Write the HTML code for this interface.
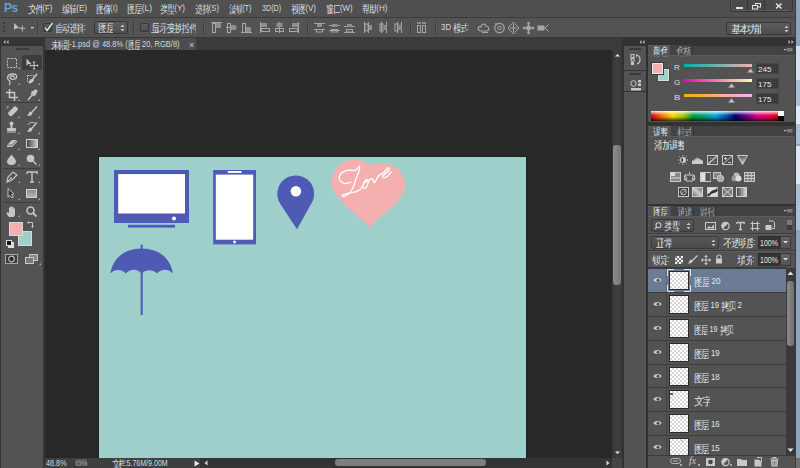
<!DOCTYPE html>
<html><head><meta charset="utf-8">
<style>
*{margin:0;padding:0;box-sizing:border-box}
html,body{width:800px;height:468px;overflow:hidden}
body{position:relative;background:#535353;font-family:"Liberation Sans",sans-serif;color:#d6d6d6;font-size:11px}
.a{position:absolute;display:block}
.t{position:absolute;white-space:nowrap;line-height:1;transform-origin:0 0}
.t i,.t b{display:inline-block;white-space:pre;font-style:normal;font-weight:normal;vertical-align:top;line-height:1}
.t i{text-align:center;overflow:hidden}
</style></head><body>
<div class="a" style="left:795px;top:0px;width:5px;height:468px;background:#8fa5be;"></div>
<div class="a" style="left:796px;top:46px;width:4px;height:34px;background:#d6e0ec;"></div>
<div class="a" style="left:796px;top:80px;width:4px;height:26px;background:#a9c0d9;"></div>
<div class="a" style="left:796px;top:106px;width:4px;height:18px;background:#e3e9f1;"></div>
<div class="a" style="left:796px;top:124px;width:4px;height:20px;background:#aac0d8;"></div>
<div class="a" style="left:796px;top:146px;width:4px;height:38px;background:#e0e7f0;"></div>
<div class="a" style="left:796px;top:184px;width:4px;height:46px;background:#a9bfd7;"></div>
<div class="a" style="left:796px;top:458px;width:4px;height:10px;background:#6f6f6f;"></div>
<div class="a" style="left:795px;top:0px;width:1px;height:468px;background:#3a3a3a;"></div>
<div class="a" style="left:0px;top:0px;width:795px;height:17px;background:#505050;"></div>
<div class="a" style="left:0px;top:17px;width:795px;height:1px;background:#3c3c3c;"></div>
<div class="a" style="left:0px;top:18px;width:795px;height:19px;background:#535353;"></div>
<div class="a" style="left:0px;top:37px;width:795px;height:1px;background:#383838;"></div>
<div class="a" style="left:0px;top:38px;width:45px;height:430px;background:#353535;"></div>
<div class="a" style="left:1px;top:46px;width:42px;height:422px;background:#535353;"></div>
<div class="a" style="left:45px;top:38px;width:577px;height:12px;background:#3b3b3b;"></div>
<div class="a" style="left:45px;top:38px;width:151px;height:12px;background:#4d4d4d;"></div>
<div class="a" style="left:45px;top:50px;width:567px;height:408px;background:#282828;"></div>
<div class="a" style="left:98px;top:156px;width:429px;height:302px;background:#202020;box-shadow:0 0 1px #222"></div>
<div class="a" style="left:99px;top:157px;width:427px;height:301px;background:#9ecfcb;"></div>
<div class="a" style="left:612px;top:50px;width:10px;height:408px;background:#3a3a3a;background:linear-gradient(90deg,#343434,#3f3f3f 50%,#383838)"></div>
<div class="a" style="left:613px;top:145px;width:8px;height:140px;background:#808080;border-radius:3px;background:linear-gradient(90deg,#8c8c8c,#767676)"></div>
<div class="a" style="left:45px;top:458px;width:155px;height:10px;background:#3f3f3f;"></div>
<div class="a" style="left:200px;top:458px;width:412px;height:10px;background:#333333;"></div>
<div class="a" style="left:335px;top:459px;width:151px;height:7px;background:#7d7d7d;border-radius:3px"></div>
<div class="a" style="left:612px;top:458px;width:10px;height:10px;background:#454545;"></div>
<div class="a" style="left:622px;top:38px;width:173px;height:430px;background:#323232;"></div>
<div class="a" style="left:624px;top:46px;width:22px;height:24px;background:#535353;"></div>
<div class="a" style="left:624px;top:71px;width:22px;height:20px;background:#535353;"></div>
<div class="a" style="left:624px;top:92px;width:22px;height:376px;background:#535353;"></div>
<div class="a" style="left:648px;top:46px;width:147px;height:9px;background:#424242;"></div>
<div class="a" style="left:648px;top:46px;width:22px;height:10px;background:#535353;"></div>
<div class="a" style="left:648px;top:55px;width:147px;height:67px;background:#535353;"></div>
<div class="a" style="left:648px;top:126px;width:147px;height:10px;background:#424242;"></div>
<div class="a" style="left:648px;top:126px;width:23px;height:10px;background:#535353;"></div>
<div class="a" style="left:648px;top:136px;width:147px;height:68px;background:#535353;"></div>
<div class="a" style="left:648px;top:206px;width:147px;height:10px;background:#424242;"></div>
<div class="a" style="left:648px;top:216px;width:147px;height:252px;background:#535353;"></div>
<svg class="a" style="left:0px;top:0px;" width="800" height="468" viewBox="0 0 800 468"><rect x="114" y="170" width="75" height="53" fill="#4e5ab4"/><rect x="118.2" y="174.1" width="66.8" height="39.4" fill="#fff"/><circle cx="174" cy="218.6" r="2" fill="#fff"/><rect x="128" y="224.8" width="47" height="2.8" fill="#4e5ab4"/><rect x="213.2" y="170" width="42.8" height="74.4" fill="#4e5ab4"/><rect x="215.8" y="174.6" width="37.4" height="65.1" fill="#fff"/><rect x="227.8" y="171" width="13.7" height="1.9" fill="#fff"/><circle cx="234.6" cy="242" r="1.4" fill="#fff"/><path d="M297.0,229.2 L280.34,203.93 A18.4,18.4 0 1 1 311.76,202.77 Z" fill="#4e5ab4"/><circle cx="295.9" cy="191.2" r="5.3" fill="#fff"/><path d="M370,227.3 C358,214 331.8,200 331.8,182 C331.8,168 342,159.7 354,159.7 C362,159.7 368,163 370,165.4 C372,164.5 377,163.2 383.1,163.2 C395,163.2 405.1,173 405.1,185.3 C405.1,202 382,213 370,227.3 Z" fill="#f4afaf"/><path d="M350.90,182.30 C349.88,182.50 346.63,183.83 344.80,183.50 C342.97,183.17 340.78,181.58 339.90,180.30 C339.02,179.02 339.03,177.15 339.50,175.80 C339.97,174.45 341.15,173.15 342.70,172.20 C344.25,171.25 346.83,170.38 348.80,170.10 C350.77,169.82 353.07,170.77 354.50,170.50 C355.93,170.23 356.58,169.23 357.40,168.50 C358.22,167.77 359.07,166.50 359.40,166.10" fill="none" stroke="#fff" stroke-width="1.35" stroke-linecap="round" stroke-linejoin="round"/><path d="M359.40,166.10 C359.43,166.63 359.80,168.08 359.60,169.30 C359.40,170.52 358.78,171.90 358.20,173.40 C357.62,174.90 356.78,176.40 356.10,178.30 C355.42,180.20 354.83,182.85 354.10,184.80 C353.37,186.75 352.72,188.45 351.70,190.00 C350.68,191.55 349.30,193.05 348.00,194.10 C346.70,195.15 344.87,195.98 343.90,196.30 C342.93,196.62 342.33,196.30 342.20,196.00 C342.07,195.70 342.27,194.95 343.10,194.50 C343.93,194.05 345.30,193.70 347.20,193.30 C349.10,192.90 352.47,192.65 354.50,192.10 C356.53,191.55 358.05,190.95 359.40,190.00 C360.75,189.05 362.07,187.00 362.60,186.40" fill="none" stroke="#fff" stroke-width="1.35" stroke-linecap="round" stroke-linejoin="round"/><path d="M362.60,186.40 C362.88,185.65 363.62,183.05 364.30,181.90 C364.98,180.75 366.03,179.63 366.70,179.50 C367.37,179.37 368.23,180.02 368.30,181.10 C368.37,182.18 367.70,184.78 367.10,186.00 C366.50,187.22 365.38,188.20 364.70,188.40 C364.02,188.60 363.13,188.02 363.00,187.20 C362.87,186.38 363.35,184.45 363.90,183.50 C364.45,182.55 365.43,181.97 366.30,181.50 C367.17,181.03 368.63,180.83 369.10,180.70" fill="none" stroke="#fff" stroke-width="1.35" stroke-linecap="round" stroke-linejoin="round"/><path d="M369.10,180.70 C369.45,180.37 370.58,178.90 371.20,178.70 C371.82,178.50 372.33,178.83 372.80,179.50 C373.27,180.17 373.52,182.50 374.00,182.70 C374.48,182.90 374.88,181.92 375.70,180.70 C376.52,179.48 378.37,176.28 378.90,175.40" fill="none" stroke="#fff" stroke-width="1.35" stroke-linecap="round" stroke-linejoin="round"/><path d="M378.90,175.40 C379.58,175.00 381.65,174.08 383.00,173.00 C384.35,171.92 385.98,169.72 387.00,168.90 C388.02,168.08 388.82,167.83 389.10,168.10 C389.38,168.37 389.45,169.48 388.70,170.50 C387.95,171.52 385.62,173.18 384.60,174.20 C383.58,175.22 382.60,176.03 382.60,176.60 C382.60,177.17 383.65,177.80 384.60,177.60 C385.55,177.40 387.22,176.37 388.30,175.40 C389.38,174.43 390.63,172.40 391.10,171.80" fill="none" stroke="#fff" stroke-width="1.35" stroke-linecap="round" stroke-linejoin="round"/><path d="M110.4,273.5 C112.4,259.5 123.65,248.5 141.65,248.5 C159.65,248.5 170.9,259.5 172.9,273.5 A10.4,10.4 0 0 0 156.9,273.5 A10.4,10.4 0 0 0 141.7,273.5 A10.4,10.4 0 0 0 125.8,273.5 A10.4,10.4 0 0 0 110.4,273.5 Z" fill="#4e5ab4"/><rect x="140.7" y="244.6" width="2" height="6" fill="#4e5ab4"/><rect x="140.7" y="268" width="2" height="47" fill="#4e5ab4"/></svg>
<div class="t" style="left:4px;top:2px;font-size:12px;font-weight:bold;color:#61a0d8;letter-spacing:-0.6px">Ps</div>
<div class="t" style="left:28px;top:4px;color:#d8d8d8;transform:scaleX(0.893);"><i style="width:8px;font-size:11px">文</i><i style="width:8px;font-size:11px">件</i><b style="font-size:9px;letter-spacing:0px">(F)</b></div>
<div class="t" style="left:62px;top:4px;color:#d8d8d8;transform:scaleX(0.893);"><i style="width:8px;font-size:11px">编</i><i style="width:8px;font-size:11px">辑</i><b style="font-size:9px;letter-spacing:0px">(E)</b></div>
<div class="t" style="left:96px;top:4px;color:#d8d8d8;transform:scaleX(0.880);"><i style="width:8px;font-size:11px">图</i><i style="width:8px;font-size:11px">像</i><b style="font-size:9px;letter-spacing:0px">(I)</b></div>
<div class="t" style="left:127px;top:4px;color:#d8d8d8;transform:scaleX(0.926);"><i style="width:8px;font-size:11px">图</i><i style="width:8px;font-size:11px">层</i><b style="font-size:9px;letter-spacing:0px">(L)</b></div>
<div class="t" style="left:160px;top:4px;color:#d8d8d8;transform:scaleX(0.893);"><i style="width:8px;font-size:11px">类</i><i style="width:8px;font-size:11px">型</i><b style="font-size:9px;letter-spacing:0px">(Y)</b></div>
<div class="t" style="left:195px;top:4px;color:#d8d8d8;transform:scaleX(0.857);"><i style="width:8px;font-size:11px">选</i><i style="width:8px;font-size:11px">择</i><b style="font-size:9px;letter-spacing:0px">(S)</b></div>
<div class="t" style="left:229px;top:4px;color:#d8d8d8;transform:scaleX(0.821);"><i style="width:8px;font-size:11px">滤</i><i style="width:8px;font-size:11px">镜</i><b style="font-size:9px;letter-spacing:0px">(T)</b></div>
<div class="t" style="left:262px;top:4px;color:#d8d8d8;transform:scaleX(0.800);"><b style="font-size:9px;letter-spacing:0px">3D(D)</b></div>
<div class="t" style="left:291px;top:4px;color:#d8d8d8;transform:scaleX(0.893);"><i style="width:8px;font-size:11px">视</i><i style="width:8px;font-size:11px">图</i><b style="font-size:9px;letter-spacing:0px">(V)</b></div>
<div class="t" style="left:326px;top:4px;color:#d8d8d8;transform:scaleX(0.871);"><i style="width:8px;font-size:11px">窗</i><i style="width:8px;font-size:11px">口</i><b style="font-size:9px;letter-spacing:0px">(W)</b></div>
<div class="t" style="left:362px;top:4px;color:#d8d8d8;transform:scaleX(0.897);"><i style="width:8px;font-size:11px">帮</i><i style="width:8px;font-size:11px">助</i><b style="font-size:9px;letter-spacing:0px">(H)</b></div>
<div class="t" style="left:55px;top:23px;color:#d8d8d8;transform:scaleX(0.939);"><i style="width:7.5px;font-size:11px">自</i><i style="width:7.5px;font-size:11px">动</i><i style="width:7.5px;font-size:11px">选</i><i style="width:7.5px;font-size:11px">择</i><b style="font-size:9px;letter-spacing:0px">:</b></div>
<div class="t" style="left:151px;top:23px;color:#d8d8d8;transform:scaleX(1.000);"><i style="width:7.5px;font-size:11px">显</i><i style="width:7.5px;font-size:11px">示</i><i style="width:7.5px;font-size:11px">变</i><i style="width:7.5px;font-size:11px">换</i><i style="width:7.5px;font-size:11px">控</i><i style="width:7.5px;font-size:11px">件</i></div>
<div class="t" style="left:441px;top:23px;color:#d8d8d8;transform:scaleX(0.879);"><b style="font-size:9px;letter-spacing:0px">3D </b><i style="width:7.5px;font-size:11px">模</i><i style="width:7.5px;font-size:11px">式</i><b style="font-size:9px;letter-spacing:0px">:</b></div>
<div class="t" style="left:51px;top:40px;color:#d8d8d8;transform:scaleX(0.834);"><i style="width:7.3px;font-size:11px">未</i><i style="width:7.3px;font-size:11px">标</i><i style="width:7.3px;font-size:11px">题</i><b style="font-size:9px;letter-spacing:0px">-1.psd @ 48.8% (</b><i style="width:7.3px;font-size:11px">图</i><i style="width:7.3px;font-size:11px">层</i><b style="font-size:9px;letter-spacing:0px"> 20, RGB/8)</b></div>
<div class="t" style="left:189px;top:41px;font-size:9px;color:#cfcfcf">×</div>
<div class="t" style="left:46px;top:459px;color:#d8d8d8;transform:scaleX(0.808);"><b style="font-size:9px;letter-spacing:0px">48.8%</b></div>
<div class="t" style="left:112px;top:459px;color:#d8d8d8;transform:scaleX(0.784);"><i style="width:8px;font-size:11px">文</i><i style="width:8px;font-size:11px">档</i><b style="font-size:9px;letter-spacing:0px">:5.76M/9.00M</b></div>
<div class="a" style="left:730px;top:0px;width:63px;height:12px;background:#4a4a4a;border:1px solid #363636;border-top:none;border-radius:0 0 3px 3px;box-shadow:inset 1px -1px 0 #5c5c5c"></div>
<div class="a" style="left:747px;top:0px;width:1px;height:11px;background:#363636;"></div>
<div class="a" style="left:764px;top:0px;width:1px;height:11px;background:#363636;"></div>
<svg class="a" style="left:730px;top:0px;" width="63" height="11" viewBox="0 0 63 11"><rect x="6" y="7" width="7" height="2" fill="#e2e2e2"/><rect x="25.5" y="3.5" width="5" height="3.5" fill="none" stroke="#e2e2e2" stroke-width="1"/><rect x="22.5" y="5.5" width="5" height="3.5" fill="#4e4e4e" stroke="#e2e2e2" stroke-width="1"/><path d="M46,3.5 L51.5,8.5 M51.5,3.5 L46,8.5" stroke="#e2e2e2" stroke-width="1.6"/></svg>
<svg class="a" style="left:2px;top:21px;" width="4" height="13" viewBox="0 0 4 13"><rect x="1" y="1" width="2" height="2" fill="#3d3d3d"/><rect x="1" y="5" width="2" height="2" fill="#3d3d3d"/><rect x="1" y="9" width="2" height="2" fill="#3d3d3d"/></svg>
<svg class="a" style="left:12px;top:21px;" width="24" height="14" viewBox="0 0 24 14"><path d="M2,2 L2,9 L4,7.5 L7.5,7Z" fill="#bcbcbc"/><path d="M10.3,4.5 V10.5 M7.3,7.3 H13.3" stroke="#c8c8c8" stroke-width="0.9"/><rect x="19" y="6" width="2.5" height="1.3" fill="#e0e0e0"/></svg>
<div class="a" style="left:37px;top:21px;width:1px;height:14px;background:#3e3e3e;"></div>
<div class="a" style="left:38px;top:21px;width:1px;height:14px;background:#5b5b5b;"></div>
<div class="a" style="left:43px;top:23px;width:9px;height:9px;background:#4c4c4c;border:1px solid #363636;border-radius:2px;background:linear-gradient(#5a5a5a,#4a4a4a);box-shadow:0 1px 0 #5c5c5c"></div>
<svg class="a" style="left:42px;top:21px;" width="12" height="12" viewBox="0 0 12 12"><path d="M3,6.5 L5,9.5 L10.5,2" fill="none" stroke="#e6e6e6" stroke-width="1.3"/></svg>
<div class="a" style="left:94px;top:21px;width:34px;height:13px;background:#555;border:1px solid #383838;border-radius:2px;background:linear-gradient(#5e5e5e,#4f4f4f)"></div>
<div class="t" style="left:98px;top:23px;color:#d8d8d8;transform:scaleX(1.000);"><i style="width:7.5px;font-size:11px">图</i><i style="width:7.5px;font-size:11px">层</i></div>
<svg class="a" style="left:120px;top:24px;" width="5" height="8" viewBox="0 0 5 8"><path d="M0.5,3 L2.5,0.8 L4.5,3Z M0.5,5 L2.5,7.2 L4.5,5Z" fill="#cdcdcd"/></svg>
<div class="a" style="left:133px;top:21px;width:1px;height:14px;background:#3e3e3e;"></div>
<div class="a" style="left:134px;top:21px;width:1px;height:14px;background:#5b5b5b;"></div>
<div class="a" style="left:140px;top:23px;width:9px;height:9px;background:#555;border:1px solid #363636;border-radius:2px;background:linear-gradient(#5e5e5e,#4e4e4e);box-shadow:0 1px 0 #5c5c5c"></div>
<div class="a" style="left:203px;top:21px;width:1px;height:14px;background:#3e3e3e;"></div>
<div class="a" style="left:204px;top:21px;width:1px;height:14px;background:#5b5b5b;"></div>
<svg class="a" style="left:211px;top:22px;" width="12" height="12" viewBox="0 0 12 12"><path d="M0,0.5 H11" stroke="#a6a6a6"/><rect x="1.5" y="1.5" width="3" height="9" fill="none" stroke="#a6a6a6"/><rect x="5" y="1" width="5" height="5" fill="#8e8e8e"/></svg>
<svg class="a" style="left:226px;top:22px;" width="12" height="12" viewBox="0 0 12 12"><path d="M0,5.5 H11" stroke="#a6a6a6"/><rect x="1.5" y="1.5" width="3" height="9" fill="none" stroke="#a6a6a6"/><rect x="5" y="3" width="5" height="5" fill="#8e8e8e"/></svg>
<svg class="a" style="left:241px;top:22px;" width="12" height="12" viewBox="0 0 12 12"><path d="M0,10.5 H11" stroke="#a6a6a6"/><rect x="1.5" y="1.5" width="3" height="9" fill="none" stroke="#a6a6a6"/><rect x="5" y="5" width="5" height="5" fill="#8e8e8e"/></svg>
<svg class="a" style="left:260px;top:22px;" width="12" height="12" viewBox="0 0 12 12"><path d="M0.5,0 V11" stroke="#a6a6a6"/><rect x="1.5" y="6.5" width="8" height="3" fill="none" stroke="#a6a6a6"/><rect x="1" y="1" width="6" height="4" fill="#8e8e8e"/></svg>
<svg class="a" style="left:275px;top:22px;" width="12" height="12" viewBox="0 0 12 12"><path d="M4.5,0 V11" stroke="#a6a6a6"/><rect x="0.5" y="6.5" width="8" height="3" fill="none" stroke="#a6a6a6"/><rect x="1.5" y="1" width="6" height="4" fill="#8e8e8e"/></svg>
<svg class="a" style="left:289px;top:22px;" width="12" height="12" viewBox="0 0 12 12"><path d="M9.5,0 V11" stroke="#a6a6a6"/><rect x="0.5" y="6.5" width="8" height="3" fill="none" stroke="#a6a6a6"/><rect x="3" y="1" width="6" height="4" fill="#8e8e8e"/></svg>
<div class="a" style="left:307px;top:21px;width:1px;height:14px;background:#3e3e3e;"></div>
<div class="a" style="left:308px;top:21px;width:1px;height:14px;background:#5b5b5b;"></div>
<svg class="a" style="left:314px;top:22px;" width="12" height="12" viewBox="0 0 12 12"><path d="M0,1.5 H11 M0,7.5 H11" stroke="#a6a6a6"/><rect x="3" y="2" width="5" height="3" fill="#8e8e8e"/><rect x="2.5" y="7.5" width="6" height="2.5" fill="none" stroke="#a6a6a6"/></svg>
<svg class="a" style="left:329px;top:22px;" width="12" height="12" viewBox="0 0 12 12"><path d="M0,3.5 H11 M0,8.5 H11" stroke="#a6a6a6"/><rect x="3" y="2" width="5" height="3" fill="#8e8e8e"/><rect x="2.5" y="7.5" width="6" height="2.5" fill="none" stroke="#a6a6a6"/></svg>
<svg class="a" style="left:344px;top:22px;" width="12" height="12" viewBox="0 0 12 12"><path d="M0,4.5 H11 M0,10.5 H11" stroke="#a6a6a6"/><rect x="3" y="2" width="5" height="3" fill="#8e8e8e"/><rect x="2.5" y="7.5" width="6" height="2.5" fill="none" stroke="#a6a6a6"/></svg>
<svg class="a" style="left:363px;top:22px;" width="12" height="12" viewBox="0 0 12 12"><path d="M1.5,0 V11 M5.5,0 V11" stroke="#a6a6a6"/><rect x="2" y="2" width="3" height="7" fill="none" stroke="#a6a6a6"/><rect x="6" y="3" width="3" height="5" fill="#8e8e8e"/></svg>
<svg class="a" style="left:378px;top:22px;" width="12" height="12" viewBox="0 0 12 12"><path d="M3.5,0 V11 M8.5,0 V11" stroke="#a6a6a6"/><rect x="2" y="2" width="3" height="7" fill="none" stroke="#a6a6a6"/><rect x="6" y="3" width="3" height="5" fill="#8e8e8e"/></svg>
<svg class="a" style="left:393px;top:22px;" width="12" height="12" viewBox="0 0 12 12"><path d="M4.5,0 V11 M8.5,0 V11" stroke="#a6a6a6"/><rect x="2" y="2" width="3" height="7" fill="none" stroke="#a6a6a6"/><rect x="6" y="3" width="3" height="5" fill="#8e8e8e"/></svg>
<div class="a" style="left:410px;top:21px;width:1px;height:14px;background:#3e3e3e;"></div>
<div class="a" style="left:411px;top:21px;width:1px;height:14px;background:#5b5b5b;"></div>
<svg class="a" style="left:416px;top:22px;" width="12" height="12" viewBox="0 0 12 12"><rect x="1.5" y="3.5" width="3" height="7" fill="none" stroke="#a6a6a6"/><rect x="6.5" y="3.5" width="3" height="7" fill="none" stroke="#a6a6a6"/><rect x="1" y="0" width="4" height="2" fill="#8e8e8e"/><rect x="6" y="0" width="4" height="2" fill="#8e8e8e"/></svg>
<div class="a" style="left:435px;top:21px;width:1px;height:14px;background:#3e3e3e;"></div>
<div class="a" style="left:436px;top:21px;width:1px;height:14px;background:#5b5b5b;"></div>
<svg class="a" style="left:477px;top:21px;" width="14" height="14" viewBox="0 0 14 14"><path d="M2,9 C0,7 2,5 4,6 C4,3 8,2 9,5 C12,5 13,9 10,10 L4,10 C3,10 2,9.5 2,9Z" fill="none" stroke="#a6a6a6" stroke-width="1.2"/><path d="M5,11.5 H11" stroke="#a6a6a6"/></svg>
<svg class="a" style="left:493px;top:21px;" width="13" height="14" viewBox="0 0 13 14"><circle cx="6.5" cy="7" r="4.7" fill="none" stroke="#a6a6a6" stroke-width="1.2"/><circle cx="6.5" cy="7" r="1.8" fill="none" stroke="#a6a6a6"/><path d="M2,2 L4.5,2.5 L3,4.5Z" fill="#a6a6a6"/></svg>
<svg class="a" style="left:507px;top:21px;" width="13" height="14" viewBox="0 0 13 14"><path d="M6.5,1 L12,7 L6.5,13 L1,7Z" fill="none" stroke="#a6a6a6"/><path d="M6.5,3 V11 M3,7 H10" stroke="#a6a6a6"/></svg>
<svg class="a" style="left:522px;top:21px;" width="13" height="14" viewBox="0 0 13 14"><path d="M6.5,1 V13 M1,7 H12" stroke="#a6a6a6" stroke-width="1.4"/><circle cx="6.5" cy="7" r="2.5" fill="#a6a6a6"/><path d="M6.5,0.5 l-2,2 h4z M6.5,13.5 l-2,-2 h4z M0.5,7 l2,-2 v4z M12.5,7 l-2,-2 v4z" fill="#a6a6a6"/></svg>
<svg class="a" style="left:537px;top:21px;" width="13" height="14" viewBox="0 0 13 14"><rect x="0.5" y="4.5" width="7" height="5" fill="#a6a6a6"/><path d="M8,7 L11.5,3.5 M8,7 L11.5,10.5" stroke="#a6a6a6" fill="none"/></svg>
<div class="a" style="left:726px;top:22px;width:65px;height:13px;background:#555;border:1px solid #383838;border-radius:2px;background:linear-gradient(#5c5c5c,#4e4e4e)"></div>
<div class="t" style="left:731px;top:24px;color:#e0e0e0;transform:scaleX(1.000);"><i style="width:7.5px;font-size:11px">基</i><i style="width:7.5px;font-size:11px">本</i><i style="width:7.5px;font-size:11px">功</i><i style="width:7.5px;font-size:11px">能</i></div>
<svg class="a" style="left:784px;top:25px;" width="5" height="8" viewBox="0 0 5 8"><path d="M0.5,3 L2.5,0.8 L4.5,3Z M0.5,5 L2.5,7.2 L4.5,5Z" fill="#cdcdcd"/></svg>
<svg class="a" style="left:3px;top:40px;" width="6" height="4" viewBox="0 0 6 4"><path d="M2.5,0 L0.5,2 L2.5,4Z M5.5,0 L3.5,2 L5.5,4Z" fill="#bdbdbd"/></svg>
<svg class="a" style="left:16px;top:48px;" width="13" height="3" viewBox="0 0 13 3"><rect x="0" y="0" width="13" height="2" fill="#3b3b3b"/></svg>
<div class="a" style="left:22px;top:55px;width:20px;height:15px;background:#3c3c3c;border-radius:2px"></div>
<svg class="a" style="left:6px;top:57px;" width="14" height="13" viewBox="0 0 14 13"><rect x="1.5" y="1.5" width="9" height="9" fill="none" stroke="#c6c6c6" stroke-dasharray="2,1.2"/></svg>
<svg class="a" style="left:18px;top:67px;" width="2" height="2" viewBox="0 0 2 2"><path d="M2,0 V2 H0Z" fill="#a8a8a8"/></svg>
<svg class="a" style="left:25px;top:58px;" width="15" height="13" viewBox="0 0 15 13"><path d="M1.5,0.5 V8 L3.5,6 L6.5,6Z" fill="#c6c6c6"/><path d="M9,4 V11 M5.5,7.5 H12.5" stroke="#c6c6c6"/><path d="M9,3 l-1.5,1.5 h3z M9,12 l-1.5,-1.5 h3z M4.5,7.5 l1.5,-1.5 v3z M13.5,7.5 l-1.5,-1.5 v3z" fill="#c6c6c6"/></svg>
<svg class="a" style="left:6px;top:73px;" width="14" height="13" viewBox="0 0 14 13"><path d="M4,8 C0,6 1,1 7,1 C11,1 12,4 9,6 C7,7 4,6 4,4 C5,2 9,3 8,5 M4,8 C3,10 5,11 3,12" fill="none" stroke="#c6c6c6" stroke-width="1.3"/></svg>
<svg class="a" style="left:18px;top:83px;" width="2" height="2" viewBox="0 0 2 2"><path d="M2,0 V2 H0Z" fill="#a8a8a8"/></svg>
<svg class="a" style="left:26px;top:73px;" width="14" height="13" viewBox="0 0 14 13"><rect x="1.5" y="2.5" width="6" height="6" fill="none" stroke="#c6c6c6" stroke-dasharray="1.5,1"/><path d="M11,1 L6,7" stroke="#c6c6c6" stroke-width="1.6"/><path d="M2,10 C4,11 7,10 7,7 L5,6 C3,7 4,9 2,10Z" fill="#c6c6c6"/></svg>
<svg class="a" style="left:38px;top:83px;" width="2" height="2" viewBox="0 0 2 2"><path d="M2,0 V2 H0Z" fill="#a8a8a8"/></svg>
<svg class="a" style="left:6px;top:89px;" width="14" height="13" viewBox="0 0 14 13"><path d="M3.5,0 V8.5 H12 M0,3.5 H8.5 V12" fill="none" stroke="#c6c6c6" stroke-width="1.5"/></svg>
<svg class="a" style="left:18px;top:99px;" width="2" height="2" viewBox="0 0 2 2"><path d="M2,0 V2 H0Z" fill="#a8a8a8"/></svg>
<svg class="a" style="left:26px;top:89px;" width="14" height="13" viewBox="0 0 14 13"><path d="M2,11 L7,5" stroke="#c6c6c6" stroke-width="1.5"/><path d="M6,3 L10,1 L11,2 L9,6 Z M5,4 L8,7" stroke="#c6c6c6" fill="#c6c6c6" stroke-width="1.2"/></svg>
<svg class="a" style="left:38px;top:99px;" width="2" height="2" viewBox="0 0 2 2"><path d="M2,0 V2 H0Z" fill="#a8a8a8"/></svg>
<div class="a" style="left:3px;top:102px;width:38px;height:1px;background:#3e3e3e;"></div>
<svg class="a" style="left:6px;top:106px;" width="14" height="13" viewBox="0 0 14 13"><rect x="2" y="3" width="11" height="5" rx="2" transform="rotate(-45 7 6)" fill="#c6c6c6"/><path d="M1,2.5 V0.8 H3" stroke="#aaa" fill="none"/></svg>
<svg class="a" style="left:18px;top:116px;" width="2" height="2" viewBox="0 0 2 2"><path d="M2,0 V2 H0Z" fill="#a8a8a8"/></svg>
<svg class="a" style="left:26px;top:106px;" width="14" height="13" viewBox="0 0 14 13"><path d="M11,0.5 L6,6" stroke="#c6c6c6" stroke-width="1.4"/><path d="M1,10 C4,10 7,9 6.5,6.5 L5,5.5 C2,6 3,9 1,10Z" fill="#c6c6c6"/></svg>
<svg class="a" style="left:38px;top:116px;" width="2" height="2" viewBox="0 0 2 2"><path d="M2,0 V2 H0Z" fill="#a8a8a8"/></svg>
<svg class="a" style="left:6px;top:121px;" width="14" height="13" viewBox="0 0 14 13"><circle cx="5.5" cy="2.5" r="2" fill="#c6c6c6"/><rect x="4.5" y="3" width="2" height="4" fill="#c6c6c6"/><rect x="1" y="7" width="9" height="3" rx="1" fill="#c6c6c6"/><rect x="1" y="10.5" width="9" height="1" fill="#c6c6c6"/></svg>
<svg class="a" style="left:18px;top:132px;" width="2" height="2" viewBox="0 0 2 2"><path d="M2,0 V2 H0Z" fill="#a8a8a8"/></svg>
<svg class="a" style="left:26px;top:121px;" width="14" height="13" viewBox="0 0 14 13"><path d="M11,1.5 L6,7" stroke="#c6c6c6" stroke-width="1.4"/><path d="M1,11 C4,11 7,10 6.5,7.5 L5,6.5 C2,7 3,10 1,11Z" fill="#c6c6c6"/><path d="M2,4 C3,1 7,1 9,2" stroke="#c6c6c6" fill="none"/></svg>
<svg class="a" style="left:38px;top:132px;" width="2" height="2" viewBox="0 0 2 2"><path d="M2,0 V2 H0Z" fill="#a8a8a8"/></svg>
<svg class="a" style="left:6px;top:138px;" width="14" height="13" viewBox="0 0 14 13"><path d="M1,7 L6,2 L11,2 L11,4 L6,9 L1,9Z" fill="#c6c6c6"/><path d="M1,7 H6 L11,2" stroke="#6a6a6a" fill="none"/></svg>
<svg class="a" style="left:18px;top:148px;" width="2" height="2" viewBox="0 0 2 2"><path d="M2,0 V2 H0Z" fill="#a8a8a8"/></svg>
<svg class="a" style="left:26px;top:139px;" width="14" height="13" viewBox="0 0 14 13"><defs><linearGradient id="gr" x1="0" x2="1"><stop offset="0" stop-color="#3e3e3e"/><stop offset="1" stop-color="#d0d0d0"/></linearGradient></defs><rect x="0.5" y="0.5" width="11" height="8" fill="url(#gr)" stroke="#cfcfcf"/></svg>
<svg class="a" style="left:38px;top:148px;" width="2" height="2" viewBox="0 0 2 2"><path d="M2,0 V2 H0Z" fill="#a8a8a8"/></svg>
<svg class="a" style="left:7px;top:154px;" width="14" height="13" viewBox="0 0 14 13"><path d="M4.5,0.5 C6,3 9,5 9,7.5 C9,10 7,11 4.5,11 C2,11 0,10 0,7.5 C0,5 3,3 4.5,0.5Z" fill="#c6c6c6"/></svg>
<svg class="a" style="left:18px;top:164px;" width="2" height="2" viewBox="0 0 2 2"><path d="M2,0 V2 H0Z" fill="#a8a8a8"/></svg>
<svg class="a" style="left:26px;top:154px;" width="14" height="13" viewBox="0 0 14 13"><circle cx="4.5" cy="4.5" r="3.8" fill="#c6c6c6"/><path d="M7,7 L10.5,10.5" stroke="#c6c6c6" stroke-width="1.5"/></svg>
<svg class="a" style="left:38px;top:164px;" width="2" height="2" viewBox="0 0 2 2"><path d="M2,0 V2 H0Z" fill="#a8a8a8"/></svg>
<div class="a" style="left:3px;top:168px;width:38px;height:1px;background:#3e3e3e;"></div>
<svg class="a" style="left:6px;top:171px;" width="14" height="13" viewBox="0 0 14 13"><path d="M1,11 L2,6 L7,1 L11,4 L6,9Z" fill="none" stroke="#c6c6c6" stroke-width="1.2"/><path d="M1,11 L4.5,7.5" stroke="#c6c6c6"/><circle cx="4.8" cy="7.2" r="1" fill="#c6c6c6"/></svg>
<svg class="a" style="left:18px;top:181px;" width="2" height="2" viewBox="0 0 2 2"><path d="M2,0 V2 H0Z" fill="#a8a8a8"/></svg>
<svg class="a" style="left:26px;top:171px;" width="14" height="13" viewBox="0 0 14 13"><path d="M1,1 H11 V3 M1,1 V3 M6,1 V11 M4,11 H8" stroke="#c6c6c6" stroke-width="1.4" fill="none"/></svg>
<svg class="a" style="left:38px;top:181px;" width="2" height="2" viewBox="0 0 2 2"><path d="M2,0 V2 H0Z" fill="#a8a8a8"/></svg>
<svg class="a" style="left:7px;top:188px;" width="14" height="13" viewBox="0 0 14 13"><path d="M1,0.5 L1,9 L3,7.5 L5,10 L6.5,9 L4.5,6.5 L7,6Z" fill="#333" stroke="#c6c6c6" stroke-width="1"/></svg>
<svg class="a" style="left:18px;top:198px;" width="2" height="2" viewBox="0 0 2 2"><path d="M2,0 V2 H0Z" fill="#a8a8a8"/></svg>
<svg class="a" style="left:26px;top:189px;" width="14" height="13" viewBox="0 0 14 13"><defs><linearGradient id="rg" x1="0" y1="0" x2="0" y2="1"><stop offset="0" stop-color="#8a8a8a"/><stop offset="1" stop-color="#b8b8b8"/></linearGradient></defs><rect x="0.5" y="0.5" width="10" height="8" fill="url(#rg)" stroke="#d0d0d0"/></svg>
<svg class="a" style="left:38px;top:198px;" width="2" height="2" viewBox="0 0 2 2"><path d="M2,0 V2 H0Z" fill="#a8a8a8"/></svg>
<div class="a" style="left:3px;top:202px;width:38px;height:1px;background:#3e3e3e;"></div>
<svg class="a" style="left:6px;top:206px;" width="14" height="13" viewBox="0 0 14 13"><path d="M3,11 C1,9 0,7 1,6 L3,7 V2 C3,1 4.5,1 4.5,2 V6 V1 C4.5,0 6,0 6,1 V6 V1.5 C6,0.5 7.5,0.5 7.5,1.5 V6 V3 C7.5,2 9,2 9,3 V8 C9,10 8,11 7,11Z" fill="#c6c6c6"/></svg>
<svg class="a" style="left:18px;top:215px;" width="2" height="2" viewBox="0 0 2 2"><path d="M2,0 V2 H0Z" fill="#a8a8a8"/></svg>
<svg class="a" style="left:26px;top:206px;" width="14" height="13" viewBox="0 0 14 13"><circle cx="4.5" cy="4.5" r="3.5" fill="none" stroke="#c6c6c6" stroke-width="1.6"/><path d="M7,7 L10.5,10.5" stroke="#c6c6c6" stroke-width="1.8"/></svg>
<div class="a" style="left:18px;top:231px;width:14px;height:15px;background:#9ecfcb;border:1px solid #d8d8d8"></div>
<div class="a" style="left:9px;top:222px;width:14px;height:14px;background:#f5afaf;border:1px solid #d8d8d8"></div>
<svg class="a" style="left:27px;top:220px;" width="8" height="8" viewBox="0 0 8 8"><path d="M1.5,2.5 H5.5 V6.5" fill="none" stroke="#c6c6c6"/><path d="M0,2.5 L2,1 V4Z M5.5,8 L4,6 H7Z" fill="#c6c6c6"/></svg>
<svg class="a" style="left:6px;top:240px;" width="8" height="8" viewBox="0 0 8 8"><rect x="2.5" y="2.5" width="5" height="5" fill="#ddd" stroke="#ddd"/><rect x="0.5" y="0.5" width="5" height="5" fill="#111" stroke="#ddd"/></svg>
<svg class="a" style="left:5px;top:254px;" width="13" height="10" viewBox="0 0 13 10"><rect x="0.5" y="0.5" width="12" height="9" fill="#3a3a3a" stroke="#a8a8a8"/><circle cx="6.5" cy="5" r="2.8" fill="#2a2a2a" stroke="#bdbdbd" stroke-width="1.2"/></svg>
<svg class="a" style="left:25px;top:254px;" width="14" height="11" viewBox="0 0 14 11"><rect x="4.5" y="0.5" width="8" height="6" fill="#888" stroke="#c6c6c6"/><rect x="0.5" y="3.5" width="8" height="6" fill="#777" stroke="#c6c6c6"/></svg>
<svg class="a" style="left:39px;top:263px;" width="2" height="2" viewBox="0 0 2 2"><path d="M2,0 V2 H0Z" fill="#a8a8a8"/></svg>
<svg class="a" style="left:639px;top:40px;" width="6" height="4" viewBox="0 0 6 4"><path d="M2.5,0 L0.5,2 L2.5,4Z M5.5,0 L3.5,2 L5.5,4Z" fill="#bdbdbd"/></svg>
<svg class="a" style="left:788px;top:40px;" width="6" height="4" viewBox="0 0 6 4"><path d="M0.5,0 L2.5,2 L0.5,4Z M3.5,0 L5.5,2 L3.5,4Z" fill="#bdbdbd"/></svg>
<div class="a" style="left:629px;top:48px;width:12px;height:2px;background:#3b3b3b;"></div>
<div class="a" style="left:629px;top:73px;width:12px;height:2px;background:#3b3b3b;"></div>
<svg class="a" style="left:630px;top:54px;" width="13" height="12" viewBox="0 0 13 12"><rect x="1" y="0.5" width="3" height="3" fill="none" stroke="#c6c6c6"/><rect x="1" y="4.5" width="3" height="2.5" fill="none" stroke="#c6c6c6"/><rect x="1" y="8" width="3" height="3" fill="#c6c6c6"/><path d="M7,1.5 C11,2 11,9 7,10" fill="none" stroke="#c6c6c6" stroke-width="1.2"/><path d="M6,0 L8.5,1.5 L6,3Z" fill="#c6c6c6"/></svg>
<svg class="a" style="left:630px;top:79px;" width="13" height="12" viewBox="0 0 13 12"><path d="M1,3 L3.5,1.5 L6,3 V6 L3.5,7.5 L1,6Z" fill="none" stroke="#c6c6c6"/><rect x="8" y="1" width="3" height="2.5" fill="#c6c6c6"/><rect x="8" y="4.5" width="3" height="2.5" fill="#c6c6c6"/><rect x="1" y="9" width="10" height="2.5" fill="#c6c6c6"/></svg>
<div class="a" style="left:646px;top:46px;width:2px;height:422px;background:#2f2f2f;"></div>
<div class="a" style="left:648px;top:45px;width:22px;height:10px;background:#535353;box-shadow:inset 0 1px 0 #5e5e5e"></div>
<div class="t" style="left:653px;top:46px;color:#dcdcdc;transform:scaleX(0.959);"><i style="width:7.3px;font-size:11px">颜</i><i style="width:7.3px;font-size:11px">色</i></div>
<div class="a" style="left:670px;top:45px;width:23px;height:10px;background:#424242;border-right:1px solid #383838"></div>
<div class="t" style="left:676px;top:46px;color:#a4a4a4;transform:scaleX(0.959);"><i style="width:7.3px;font-size:11px">色</i><i style="width:7.3px;font-size:11px">板</i></div>
<svg class="a" style="left:783px;top:48px;" width="10" height="5" viewBox="0 0 10 5"><path d="M0.5,1 H3.5 L2,2.5Z" fill="#d0d0d0"/><rect x="4" y="0" width="5.5" height="3.5" fill="#7a7a7a"/></svg>
<div class="a" style="left:648px;top:55px;width:147px;height:1px;background:#5c5c5c;"></div>
<div class="a" style="left:658px;top:69px;width:11px;height:12px;background:#9ecfcb;border:1px solid #e0e0e0;outline:1px solid #444"></div>
<div class="a" style="left:652px;top:63px;width:11px;height:11px;background:#f5afaf;border:1px solid #e8e8e8;outline:1px solid #3a3a3a"></div>
<div class="t" style="left:674px;top:64px;color:#dcdcdc;transform:scaleX(1.000);"><b style="font-size:8px;letter-spacing:0px">R</b></div>
<div class="t" style="left:674px;top:79px;color:#dcdcdc;transform:scaleX(1.000);"><b style="font-size:8px;letter-spacing:0px">G</b></div>
<div class="t" style="left:674px;top:94px;color:#dcdcdc;transform:scaleX(1.200);"><b style="font-size:8px;letter-spacing:0px">B</b></div>
<div class="a" style="left:684px;top:64px;width:68px;height:3px;background:linear-gradient(90deg,#00afaf,#f5afaf);"></div>
<div class="a" style="left:684px;top:79px;width:68px;height:3px;background:linear-gradient(90deg,#f500af,#f5ffaf);"></div>
<div class="a" style="left:684px;top:94px;width:68px;height:3px;background:linear-gradient(90deg,#f5af00,#f5afff);"></div>
<svg class="a" style="left:746.5px;top:68px;" width="7" height="5" viewBox="0 0 7 5"><path d="M3.5,0.5 L6.5,4.5 H0.5Z" fill="#c8c8c8" stroke="#8a8a8a" stroke-width="0.6"/></svg>
<svg class="a" style="left:728px;top:83px;" width="7" height="5" viewBox="0 0 7 5"><path d="M3.5,0.5 L6.5,4.5 H0.5Z" fill="#c8c8c8" stroke="#8a8a8a" stroke-width="0.6"/></svg>
<svg class="a" style="left:728px;top:98px;" width="7" height="5" viewBox="0 0 7 5"><path d="M3.5,0.5 L6.5,4.5 H0.5Z" fill="#c8c8c8" stroke="#8a8a8a" stroke-width="0.6"/></svg>
<div class="a" style="left:756px;top:63px;width:23px;height:11px;background:#3b3b3b;border:1px solid #474747"></div>
<div class="t" style="left:758px;top:66px;color:#e8e8e8;transform:scaleX(1.000);"><b style="font-size:8px;letter-spacing:0px">245</b></div>
<div class="a" style="left:756px;top:78px;width:23px;height:11px;background:#3b3b3b;border:1px solid #474747"></div>
<div class="t" style="left:758px;top:81px;color:#e8e8e8;transform:scaleX(1.000);"><b style="font-size:8px;letter-spacing:0px">175</b></div>
<div class="a" style="left:756px;top:93px;width:23px;height:11px;background:#3b3b3b;border:1px solid #474747"></div>
<div class="t" style="left:758px;top:96px;color:#e8e8e8;transform:scaleX(1.000);"><b style="font-size:8px;letter-spacing:0px">175</b></div>
<div class="a" style="left:651px;top:111px;width:128px;height:10px;background:linear-gradient(90deg,#e00000 0%,#f07000 8%,#f5d800 17%,#a8c800 25%,#00a040 33%,#00a080 42%,#00a8e0 50%,#0060b0 58%,#000070 66%,#70008a 75%,#e0008a 83%,#f00050 92%,#e00000 100%);"></div>
<div class="a" style="left:651px;top:111px;width:128px;height:10px;background:linear-gradient(rgba(255,255,255,.9) 0%,rgba(255,255,255,.35) 25%,rgba(255,255,255,0) 45%,rgba(0,0,0,0) 55%,rgba(0,0,0,.75) 100%);"></div>
<div class="a" style="left:778px;top:111px;width:6px;height:5px;background:#ffffff;"></div>
<div class="a" style="left:778px;top:116px;width:6px;height:5px;background:#000000;"></div>
<div class="a" style="left:648px;top:123px;width:147px;height:3px;background:#323232;"></div>
<div class="a" style="left:648px;top:126px;width:23px;height:10px;background:#535353;box-shadow:inset 0 1px 0 #5e5e5e"></div>
<div class="t" style="left:653px;top:127px;color:#dcdcdc;transform:scaleX(0.959);"><i style="width:7.3px;font-size:11px">调</i><i style="width:7.3px;font-size:11px">整</i></div>
<div class="a" style="left:671px;top:126px;width:23px;height:10px;background:#424242;border-right:1px solid #383838"></div>
<div class="t" style="left:677px;top:127px;color:#a4a4a4;transform:scaleX(0.959);"><i style="width:7.3px;font-size:11px">样</i><i style="width:7.3px;font-size:11px">式</i></div>
<svg class="a" style="left:783px;top:129px;" width="10" height="5" viewBox="0 0 10 5"><path d="M0.5,1 H3.5 L2,2.5Z" fill="#d0d0d0"/><rect x="4" y="0" width="5.5" height="3.5" fill="#7a7a7a"/></svg>
<div class="a" style="left:648px;top:136px;width:147px;height:1px;background:#5c5c5c;"></div>
<div class="t" style="left:654px;top:140px;color:#e0e0e0;transform:scaleX(1.000);"><i style="width:7.5px;font-size:11px">添</i><i style="width:7.5px;font-size:11px">加</i><i style="width:7.5px;font-size:11px">调</i><i style="width:7.5px;font-size:11px">整</i></div>
<svg class="a" style="left:677px;top:155px;" width="12" height="10" viewBox="0 0 12 10"><circle cx="6" cy="5" r="2.6" fill="none" stroke="#cacaca"/><path d="M6,5 V2.4 A2.6,2.6 0 0 1 6,7.6Z" fill="#cacaca"/><path d="M6,0 V1.2 M6,8.8 V10 M1,5 H2.2 M9.8,5 H11 M2.4,1.4 l0.9,0.9 M8.7,7.7 l0.9,0.9 M9.6,1.4 l-0.9,0.9 M2.4,8.6 l0.9,-0.9" stroke="#cacaca"/></svg>
<svg class="a" style="left:692px;top:155px;" width="12" height="10" viewBox="0 0 12 10"><path d="M0,9 V6 L1,5 L2,6 L3,3 L4,5 L5,2 L6,4 L7,3 L8,5 L9,4 L10,6 L11,5 V9Z" fill="#cacaca"/></svg>
<svg class="a" style="left:707px;top:155px;" width="12" height="10" viewBox="0 0 12 10"><rect x="0.5" y="0.5" width="10" height="9" fill="#4a4a4a" stroke="#cacaca"/><path d="M0.5,3.5 H10.5 M0.5,6.5 H10.5 M3.5,0.5 V9.5 M7,0.5 V9.5" stroke="#888" stroke-width="0.6"/><path d="M1,9 L10,1" stroke="#cacaca" stroke-width="1.2"/></svg>
<svg class="a" style="left:722px;top:155px;" width="12" height="10" viewBox="0 0 12 10"><rect x="0.5" y="0.5" width="10" height="9" fill="#4a4a4a" stroke="#cacaca"/><path d="M1,9 L10,1" stroke="#cacaca"/><path d="M2,3.5 H5 M3.5,2 V5 M6,7.5 H9" stroke="#cacaca"/></svg>
<svg class="a" style="left:737px;top:155px;" width="12" height="10" viewBox="0 0 12 10"><defs><linearGradient id="vg" x1="0" y1="0" x2="0" y2="1"><stop offset="0" stop-color="#555"/><stop offset="1" stop-color="#ddd"/></linearGradient></defs><path d="M0.5,0.5 H10.5 L5.5,9.5Z" fill="url(#vg)" stroke="#cfcfcf"/></svg>
<svg class="a" style="left:670px;top:172px;" width="12" height="10" viewBox="0 0 12 10"><rect x="0.5" y="0.5" width="10" height="9" fill="#888" stroke="#cacaca"/><rect x="1" y="1" width="4" height="3" fill="#ddd"/><path d="M1,6 H10" stroke="#ddd"/></svg>
<svg class="a" style="left:684px;top:172px;" width="12" height="10" viewBox="0 0 12 10"><path d="M5.5,0 V2 M1,3 H10 M1,3 L0,7 H3Z M10,3 L8,7 H11Z M2,9 H9" stroke="#cacaca" fill="none"/><path d="M0,7 A1.5,1.5 0 0 0 3,7Z M8,7 A1.5,1.5 0 0 0 11,7Z" fill="#cacaca"/></svg>
<svg class="a" style="left:700px;top:172px;" width="12" height="10" viewBox="0 0 12 10"><rect x="0.5" y="0.5" width="10" height="9" fill="#ddd" stroke="#cacaca"/><rect x="5.5" y="1" width="5" height="8" fill="#555"/></svg>
<svg class="a" style="left:713px;top:172px;" width="12" height="10" viewBox="0 0 12 10"><rect x="0.5" y="0.5" width="7" height="6" fill="#888" stroke="#cacaca"/><circle cx="7.5" cy="6.5" r="3.2" fill="#aaa" stroke="#cacaca"/></svg>
<svg class="a" style="left:731px;top:172px;" width="12" height="10" viewBox="0 0 12 10"><circle cx="5.5" cy="3.5" r="3" fill="#bbb"/><circle cx="3.5" cy="6.5" r="3" fill="#999"/><circle cx="7.5" cy="6.5" r="3" fill="#ddd"/></svg>
<svg class="a" style="left:744px;top:172px;" width="12" height="10" viewBox="0 0 12 10"><rect x="0.5" y="0.5" width="10" height="9" fill="#777" stroke="#cacaca"/><path d="M3.8,0.5 V9.5 M7.2,0.5 V9.5 M0.5,3.5 H10.5 M0.5,6.5 H10.5" stroke="#cacaca"/></svg>
<svg class="a" style="left:678px;top:187px;" width="12" height="10" viewBox="0 0 12 10"><rect x="0.5" y="0.5" width="10" height="9" fill="#3e3e3e" stroke="#cacaca"/><circle cx="5.5" cy="5" r="2.8" fill="none" stroke="#cacaca"/><path d="M3,7.5 L8,2.5" stroke="#cacaca"/></svg>
<svg class="a" style="left:692px;top:187px;" width="12" height="10" viewBox="0 0 12 10"><defs><linearGradient id="pg" x1="0" y1="1" x2="1" y2="0"><stop offset="0" stop-color="#666"/><stop offset="0.5" stop-color="#ccc"/><stop offset="1" stop-color="#666"/></linearGradient></defs><rect x="0.5" y="0.5" width="10" height="9" fill="url(#pg)" stroke="#cfcfcf"/></svg>
<svg class="a" style="left:707px;top:187px;" width="12" height="10" viewBox="0 0 12 10"><rect x="0.5" y="0.5" width="10" height="9" fill="#ddd" stroke="#cacaca"/><path d="M0.5,7 C3,7 4,3 7,3 C8,3 9,2 10.5,1 V4 C9,5 8,6 7,6 C4,6 3,9.5 0.5,9.5Z" fill="#333"/></svg>
<svg class="a" style="left:722px;top:187px;" width="12" height="10" viewBox="0 0 12 10"><rect x="0.5" y="0.5" width="10" height="9" fill="#777" stroke="#cacaca"/><path d="M0.5,0.5 L10.5,9.5 M10.5,0.5 L0.5,9.5" stroke="#ddd"/></svg>
<svg class="a" style="left:736px;top:187px;" width="12" height="10" viewBox="0 0 12 10"><defs><linearGradient id="hg" x1="0" x2="1"><stop offset="0" stop-color="#444"/><stop offset="1" stop-color="#ddd"/></linearGradient></defs><rect x="0.5" y="0.5" width="10" height="9" fill="url(#hg)" stroke="#cfcfcf"/></svg>
<div class="a" style="left:648px;top:204px;width:147px;height:2px;background:#323232;"></div>
<div class="a" style="left:648px;top:206px;width:23px;height:10px;background:#535353;box-shadow:inset 0 1px 0 #5e5e5e"></div>
<div class="t" style="left:653px;top:207px;color:#dcdcdc;transform:scaleX(0.959);"><i style="width:7.3px;font-size:11px">图</i><i style="width:7.3px;font-size:11px">层</i></div>
<div class="a" style="left:671px;top:206px;width:23px;height:10px;background:#424242;border-right:1px solid #383838"></div>
<div class="t" style="left:677px;top:207px;color:#a4a4a4;transform:scaleX(0.959);"><i style="width:7.3px;font-size:11px">通</i><i style="width:7.3px;font-size:11px">道</i></div>
<div class="a" style="left:694px;top:206px;width:23px;height:10px;background:#424242;border-right:1px solid #383838"></div>
<div class="t" style="left:700px;top:207px;color:#a4a4a4;transform:scaleX(0.959);"><i style="width:7.3px;font-size:11px">路</i><i style="width:7.3px;font-size:11px">径</i></div>
<svg class="a" style="left:783px;top:209px;" width="10" height="5" viewBox="0 0 10 5"><path d="M0.5,1 H3.5 L2,2.5Z" fill="#d0d0d0"/><rect x="4" y="0" width="5.5" height="3.5" fill="#7a7a7a"/></svg>
<div class="a" style="left:648px;top:216px;width:147px;height:1px;background:#5c5c5c;"></div>
<div class="a" style="left:651px;top:219px;width:43px;height:13px;background:#4e4e4e;border:1px solid #3a3a3a;border-radius:2px;background:linear-gradient(#575757,#4b4b4b)"></div>
<svg class="a" style="left:654px;top:222px;" width="8" height="8" viewBox="0 0 8 8"><circle cx="4.5" cy="3.2" r="2.5" fill="none" stroke="#cacaca" stroke-width="1.1"/><path d="M2.8,5 L0.8,7.2" stroke="#cacaca" stroke-width="1.2"/></svg>
<div class="t" style="left:664px;top:221px;color:#dedede;transform:scaleX(1.028);"><i style="width:7.3px;font-size:11px">类</i><i style="width:7.3px;font-size:11px">型</i></div>
<svg class="a" style="left:686px;top:222px;" width="5" height="8" viewBox="0 0 5 8"><path d="M0.5,3 L2.5,0.8 L4.5,3Z M0.5,5 L2.5,7.2 L4.5,5Z" fill="#cacaca"/></svg>
<svg class="a" style="left:705px;top:221px;" width="11" height="10" viewBox="0 0 11 10"><rect x="0.5" y="1.5" width="10" height="7" fill="none" stroke="#cacaca"/><path d="M2,7 L4,5 L6,6.5 L9,3.5 V7.5 H2Z" fill="#cacaca"/></svg>
<svg class="a" style="left:721px;top:221px;" width="9" height="10" viewBox="0 0 9 10"><circle cx="4.5" cy="5" r="3.7" fill="none" stroke="#cacaca" stroke-width="1.2"/><path d="M4.5,1.3 A3.7,3.7 0 0 0 4.5,8.7 Z" fill="#cacaca" transform="rotate(45 4.5 5)"/></svg>
<svg class="a" style="left:736px;top:221px;" width="9" height="10" viewBox="0 0 9 10"><path d="M0.8,1.5 H8.2 V3 M0.8,1.5 V3 M4.5,1.5 V8.5 M3,8.5 H6" stroke="#cacaca" stroke-width="1.3" fill="none"/></svg>
<svg class="a" style="left:750px;top:221px;" width="10" height="10" viewBox="0 0 10 10"><path d="M0.5,2.5 H9.5 M0.5,7.5 H9.5 M2.5,0.5 V9.5 M7.5,0.5 V9.5" stroke="#cacaca" stroke-width="1.1"/></svg>
<svg class="a" style="left:765px;top:220px;" width="10" height="11" viewBox="0 0 10 11"><rect x="0.5" y="5" width="6" height="5" fill="#cacaca"/><path d="M4,1 H8 L9.5,2.5 V8.5 H7" fill="none" stroke="#cacaca"/></svg>
<div class="a" style="left:787px;top:220px;width:5px;height:5px;background:#7a7a7a;"></div>
<div class="a" style="left:787px;top:225px;width:5px;height:5px;background:#3a3a3a;"></div>
<div class="a" style="left:648px;top:233px;width:147px;height:1px;background:#3f3f3f;"></div>
<div class="a" style="left:648px;top:234px;width:147px;height:1px;background:#5c5c5c;"></div>
<div class="a" style="left:651px;top:236px;width:68px;height:13px;background:#4e4e4e;border:1px solid #3a3a3a;border-radius:2px;background:linear-gradient(#575757,#4b4b4b)"></div>
<div class="t" style="left:656px;top:238px;color:#dedede;transform:scaleX(1.028);"><i style="width:7.3px;font-size:11px">正</i><i style="width:7.3px;font-size:11px">常</i></div>
<svg class="a" style="left:711px;top:239px;" width="5" height="8" viewBox="0 0 5 8"><path d="M0.5,3 L2.5,0.8 L4.5,3Z M0.5,5 L2.5,7.2 L4.5,5Z" fill="#cacaca"/></svg>
<div class="t" style="left:723px;top:238px;color:#dedede;transform:scaleX(1.000);"><i style="width:7.5px;font-size:11px">不</i><i style="width:7.5px;font-size:11px">透</i><i style="width:7.5px;font-size:11px">明</i><i style="width:7.5px;font-size:11px">度</i><b style="font-size:9px;letter-spacing:0px">:</b></div>
<div class="a" style="left:758px;top:236px;width:22px;height:13px;background:#343434;border:1px solid #2e2e2e"></div>
<div class="t" style="left:760px;top:239px;color:#e6e6e6;transform:scaleX(0.783);"><b style="font-size:9px;letter-spacing:0px">100%</b></div>
<div class="a" style="left:780px;top:236px;width:11px;height:13px;background:#5b5b5b;border:1px solid #3a3a3a;background:linear-gradient(#616161,#545454)"></div>
<svg class="a" style="left:783px;top:241px;" width="5" height="3" viewBox="0 0 5 3"><path d="M0,0 H5 L2.5,2.5Z" fill="#e0e0e0"/></svg>
<div class="a" style="left:648px;top:250px;width:147px;height:1px;background:#3f3f3f;"></div>
<div class="a" style="left:648px;top:251px;width:147px;height:1px;background:#5c5c5c;"></div>
<div class="t" style="left:652px;top:255px;color:#dedede;transform:scaleX(1.000);"><i style="width:7.5px;font-size:11px">锁</i><i style="width:7.5px;font-size:11px">定</i><b style="font-size:9px;letter-spacing:0px">:</b></div>
<svg class="a" style="left:675px;top:256px;" width="8" height="8" viewBox="0 0 8 8"><rect x="0" y="0" width="8" height="8" fill="#eee"/><rect x="0" y="0" width="2" height="2" fill="#777"/><rect x="4" y="0" width="2" height="2" fill="#777"/><rect x="2" y="2" width="2" height="2" fill="#777"/><rect x="6" y="2" width="2" height="2" fill="#777"/><rect x="0" y="4" width="2" height="2" fill="#777"/><rect x="4" y="4" width="2" height="2" fill="#777"/><rect x="2" y="6" width="2" height="2" fill="#777"/><rect x="6" y="6" width="2" height="2" fill="#777"/></svg>
<svg class="a" style="left:687px;top:255px;" width="11" height="9" viewBox="0 0 11 9"><path d="M10.5,0.5 L5,6" stroke="#cacaca" stroke-width="1.3"/><path d="M0.5,8.5 C3,8.5 6,8 5.5,5.5 L4,4.5 C2,5 2.5,8 0.5,8.5Z" fill="#cacaca"/></svg>
<svg class="a" style="left:701px;top:255px;" width="10" height="10" viewBox="0 0 10 10"><path d="M5,0.5 V9.5 M0.5,5 H9.5" stroke="#cacaca"/><path d="M5,0 l-2,2 h4z M5,10 l-2,-2 h4z M0,5 l2,-2 v4z M10,5 l-2,-2 v4z" fill="#cacaca"/></svg>
<svg class="a" style="left:715px;top:254px;" width="8" height="10" viewBox="0 0 8 10"><path d="M2,4.5 V3 A2,2 0 0 1 6,3 V4.5" fill="none" stroke="#cacaca" stroke-width="1.2"/><rect x="1" y="4.5" width="6" height="5" fill="#cacaca"/></svg>
<div class="t" style="left:737px;top:255px;color:#dedede;transform:scaleX(1.000);"><i style="width:7.5px;font-size:11px">填</i><i style="width:7.5px;font-size:11px">充</i><b style="font-size:9px;letter-spacing:0px">:</b></div>
<div class="a" style="left:758px;top:253px;width:22px;height:13px;background:#343434;border:1px solid #2e2e2e"></div>
<div class="t" style="left:760px;top:256px;color:#e6e6e6;transform:scaleX(0.783);"><b style="font-size:9px;letter-spacing:0px">100%</b></div>
<div class="a" style="left:780px;top:253px;width:11px;height:13px;background:#5b5b5b;border:1px solid #3a3a3a;background:linear-gradient(#616161,#545454)"></div>
<svg class="a" style="left:783px;top:258px;" width="5" height="3" viewBox="0 0 5 3"><path d="M0,0 H5 L2.5,2.5Z" fill="#e0e0e0"/></svg>
<div class="a" style="left:648px;top:267px;width:138px;height:1px;background:#3a3a3a;"></div>
<div class="a" style="left:648px;top:269px;width:138px;height:23px;background:#6b7b94;"></div>
<div class="a" style="left:648px;top:268px;width:138px;height:1px;background:#3c3c3c;"></div>
<div class="a" style="left:666px;top:269px;width:1px;height:23px;background:#5a6a82;"></div>
<svg class="a" style="left:653px;top:277px;" width="9" height="7" viewBox="0 0 9 7"><path d="M0.3,3 C2,0.3 7,0.3 8.7,3 C7,5.7 2,5.7 0.3,3Z" fill="#cfcfcf"/><circle cx="5" cy="3.3" r="1.5" fill="#4a4a4a"/></svg>
<div class="a" style="left:669px;top:271px;width:20px;height:19px;background-color:#fff;background-image:linear-gradient(45deg,#d6d6d6 25%,transparent 25%,transparent 75%,#d6d6d6 75%),linear-gradient(45deg,#d6d6d6 25%,transparent 25%,transparent 75%,#d6d6d6 75%);background-size:4px 4px;background-position:0 0,2px 2px;border:1px solid #2a2a2a"></div>
<svg class="a" style="left:667px;top:269px;" width="24" height="23" viewBox="0 0 24 23"><path d="M0.5,7 V0.5 H7 M17,0.5 H23.5 V7 M23.5,16 V22.5 H17 M7,22.5 H0.5 V16" fill="none" stroke="#e4e4e4"/></svg>
<div class="t" style="left:694px;top:277px;color:#e4e4e4;transform:scaleX(0.900);"><i style="width:8.5px;font-size:11px">图</i><i style="width:8.5px;font-size:11px">层</i><b style="font-size:9px;letter-spacing:0px"> 20</b></div>
<div class="a" style="left:648px;top:293px;width:138px;height:23px;background:#535353;"></div>
<div class="a" style="left:648px;top:292px;width:138px;height:1px;background:#3c3c3c;"></div>
<div class="a" style="left:666px;top:293px;width:1px;height:23px;background:#444;"></div>
<svg class="a" style="left:653px;top:301px;" width="9" height="7" viewBox="0 0 9 7"><path d="M0.3,3 C2,0.3 7,0.3 8.7,3 C7,5.7 2,5.7 0.3,3Z" fill="#cfcfcf"/><circle cx="5" cy="3.3" r="1.5" fill="#4a4a4a"/></svg>
<div class="a" style="left:669px;top:295px;width:20px;height:19px;background-color:#fff;background-image:linear-gradient(45deg,#d6d6d6 25%,transparent 25%,transparent 75%,#d6d6d6 75%),linear-gradient(45deg,#d6d6d6 25%,transparent 25%,transparent 75%,#d6d6d6 75%);background-size:4px 4px;background-position:0 0,2px 2px;border:1px solid #2a2a2a"></div>
<div class="t" style="left:694px;top:301px;color:#e4e4e4;transform:scaleX(0.845);"><i style="width:8.5px;font-size:11px">图</i><i style="width:8.5px;font-size:11px">层</i><b style="font-size:9px;letter-spacing:0px"> 19 </b><i style="width:8.5px;font-size:11px">拷</i><i style="width:8.5px;font-size:11px">贝</i><b style="font-size:9px;letter-spacing:0px"> 2</b></div>
<div class="a" style="left:648px;top:317px;width:138px;height:23px;background:#535353;"></div>
<div class="a" style="left:648px;top:316px;width:138px;height:1px;background:#3c3c3c;"></div>
<div class="a" style="left:666px;top:317px;width:1px;height:23px;background:#444;"></div>
<svg class="a" style="left:653px;top:325px;" width="9" height="7" viewBox="0 0 9 7"><path d="M0.3,3 C2,0.3 7,0.3 8.7,3 C7,5.7 2,5.7 0.3,3Z" fill="#cfcfcf"/><circle cx="5" cy="3.3" r="1.5" fill="#4a4a4a"/></svg>
<div class="a" style="left:669px;top:319px;width:20px;height:19px;background-color:#fff;background-image:linear-gradient(45deg,#d6d6d6 25%,transparent 25%,transparent 75%,#d6d6d6 75%),linear-gradient(45deg,#d6d6d6 25%,transparent 25%,transparent 75%,#d6d6d6 75%);background-size:4px 4px;background-position:0 0,2px 2px;border:1px solid #2a2a2a"></div>
<div class="t" style="left:694px;top:325px;color:#e4e4e4;transform:scaleX(0.800);"><i style="width:8.5px;font-size:11px">图</i><i style="width:8.5px;font-size:11px">层</i><b style="font-size:9px;letter-spacing:0px"> 19 </b><i style="width:8.5px;font-size:11px">拷</i><i style="width:8.5px;font-size:11px">贝</i></div>
<div class="a" style="left:648px;top:341px;width:138px;height:23px;background:#535353;"></div>
<div class="a" style="left:648px;top:340px;width:138px;height:1px;background:#3c3c3c;"></div>
<div class="a" style="left:666px;top:341px;width:1px;height:23px;background:#444;"></div>
<svg class="a" style="left:653px;top:349px;" width="9" height="7" viewBox="0 0 9 7"><path d="M0.3,3 C2,0.3 7,0.3 8.7,3 C7,5.7 2,5.7 0.3,3Z" fill="#cfcfcf"/><circle cx="5" cy="3.3" r="1.5" fill="#4a4a4a"/></svg>
<div class="a" style="left:669px;top:343px;width:20px;height:19px;background-color:#fff;background-image:linear-gradient(45deg,#d6d6d6 25%,transparent 25%,transparent 75%,#d6d6d6 75%),linear-gradient(45deg,#d6d6d6 25%,transparent 25%,transparent 75%,#d6d6d6 75%);background-size:4px 4px;background-position:0 0,2px 2px;border:1px solid #2a2a2a"></div>
<div class="t" style="left:694px;top:349px;color:#e4e4e4;transform:scaleX(0.867);"><i style="width:8.5px;font-size:11px">图</i><i style="width:8.5px;font-size:11px">层</i><b style="font-size:9px;letter-spacing:0px"> 19</b></div>
<div class="a" style="left:648px;top:365px;width:138px;height:22px;background:#535353;"></div>
<div class="a" style="left:648px;top:364px;width:138px;height:1px;background:#3c3c3c;"></div>
<div class="a" style="left:666px;top:365px;width:1px;height:22px;background:#444;"></div>
<svg class="a" style="left:653px;top:373px;" width="9" height="7" viewBox="0 0 9 7"><path d="M0.3,3 C2,0.3 7,0.3 8.7,3 C7,5.7 2,5.7 0.3,3Z" fill="#cfcfcf"/><circle cx="5" cy="3.3" r="1.5" fill="#4a4a4a"/></svg>
<div class="a" style="left:669px;top:367px;width:20px;height:19px;background-color:#fff;background-image:linear-gradient(45deg,#d6d6d6 25%,transparent 25%,transparent 75%,#d6d6d6 75%),linear-gradient(45deg,#d6d6d6 25%,transparent 25%,transparent 75%,#d6d6d6 75%);background-size:4px 4px;background-position:0 0,2px 2px;border:1px solid #2a2a2a"></div>
<div class="t" style="left:694px;top:373px;color:#e4e4e4;transform:scaleX(0.867);"><i style="width:8.5px;font-size:11px">图</i><i style="width:8.5px;font-size:11px">层</i><b style="font-size:9px;letter-spacing:0px"> 18</b></div>
<div class="a" style="left:648px;top:388px;width:138px;height:23px;background:#535353;"></div>
<div class="a" style="left:648px;top:387px;width:138px;height:1px;background:#3c3c3c;"></div>
<div class="a" style="left:666px;top:388px;width:1px;height:23px;background:#444;"></div>
<svg class="a" style="left:653px;top:396px;" width="9" height="7" viewBox="0 0 9 7"><path d="M0.3,3 C2,0.3 7,0.3 8.7,3 C7,5.7 2,5.7 0.3,3Z" fill="#cfcfcf"/><circle cx="5" cy="3.3" r="1.5" fill="#4a4a4a"/></svg>
<div class="a" style="left:669px;top:390px;width:20px;height:19px;background-color:#fff;background-image:linear-gradient(45deg,#d6d6d6 25%,transparent 25%,transparent 75%,#d6d6d6 75%),linear-gradient(45deg,#d6d6d6 25%,transparent 25%,transparent 75%,#d6d6d6 75%);background-size:4px 4px;background-position:0 0,2px 2px;border:1px solid #2a2a2a"></div>
<div class="t" style="left:694px;top:396px;color:#e4e4e4;transform:scaleX(0.941);"><i style="width:8.5px;font-size:11px">文</i><i style="width:8.5px;font-size:11px">字</i></div>
<div class="a" style="left:648px;top:412px;width:138px;height:23px;background:#535353;"></div>
<div class="a" style="left:648px;top:411px;width:138px;height:1px;background:#3c3c3c;"></div>
<div class="a" style="left:666px;top:412px;width:1px;height:23px;background:#444;"></div>
<svg class="a" style="left:653px;top:420px;" width="9" height="7" viewBox="0 0 9 7"><path d="M0.3,3 C2,0.3 7,0.3 8.7,3 C7,5.7 2,5.7 0.3,3Z" fill="#cfcfcf"/><circle cx="5" cy="3.3" r="1.5" fill="#4a4a4a"/></svg>
<div class="a" style="left:669px;top:414px;width:20px;height:19px;background-color:#fff;background-image:linear-gradient(45deg,#d6d6d6 25%,transparent 25%,transparent 75%,#d6d6d6 75%),linear-gradient(45deg,#d6d6d6 25%,transparent 25%,transparent 75%,#d6d6d6 75%);background-size:4px 4px;background-position:0 0,2px 2px;border:1px solid #2a2a2a"></div>
<div class="t" style="left:694px;top:420px;color:#e4e4e4;transform:scaleX(0.867);"><i style="width:8.5px;font-size:11px">图</i><i style="width:8.5px;font-size:11px">层</i><b style="font-size:9px;letter-spacing:0px"> 16</b></div>
<div class="a" style="left:648px;top:436px;width:138px;height:23px;background:#535353;"></div>
<div class="a" style="left:648px;top:435px;width:138px;height:1px;background:#3c3c3c;"></div>
<div class="a" style="left:666px;top:436px;width:1px;height:23px;background:#444;"></div>
<svg class="a" style="left:653px;top:444px;" width="9" height="7" viewBox="0 0 9 7"><path d="M0.3,3 C2,0.3 7,0.3 8.7,3 C7,5.7 2,5.7 0.3,3Z" fill="#cfcfcf"/><circle cx="5" cy="3.3" r="1.5" fill="#4a4a4a"/></svg>
<div class="a" style="left:669px;top:438px;width:20px;height:19px;background-color:#fff;background-image:linear-gradient(45deg,#d6d6d6 25%,transparent 25%,transparent 75%,#d6d6d6 75%),linear-gradient(45deg,#d6d6d6 25%,transparent 25%,transparent 75%,#d6d6d6 75%);background-size:4px 4px;background-position:0 0,2px 2px;border:1px solid #2a2a2a"></div>
<div class="t" style="left:694px;top:444px;color:#e4e4e4;transform:scaleX(0.867);"><i style="width:8.5px;font-size:11px">图</i><i style="width:8.5px;font-size:11px">层</i><b style="font-size:9px;letter-spacing:0px"> 15</b></div>
<div class="a" style="left:670px;top:393px;width:3px;height:2px;background:#4e5ab4;"></div>
<div class="a" style="left:681px;top:416px;width:2px;height:2px;background:#f4afaf;"></div>
<div class="a" style="left:681px;top:440px;width:2px;height:2px;background:#f4afaf;"></div>
<div class="a" style="left:786px;top:268px;width:9px;height:187px;background:#3a3a3a;"></div>
<svg class="a" style="left:787px;top:271px;" width="7" height="5" viewBox="0 0 7 5"><path d="M0.5,4 L3.5,0.5 L6.5,4Z" fill="#e0e0e0"/></svg>
<div class="a" style="left:787px;top:281px;width:7px;height:65px;background:#7c7c7c;border-radius:3px;background:linear-gradient(90deg,#8a8a8a,#707070)"></div>
<svg class="a" style="left:787px;top:448px;" width="7" height="5" viewBox="0 0 7 5"><path d="M0.5,0.5 L3.5,4 L6.5,0.5Z" fill="#e0e0e0"/></svg>
<div class="a" style="left:648px;top:455px;width:147px;height:13px;background:#535353;border-top:1px solid #3c3c3c"></div>
<svg class="a" style="left:670px;top:457px;" width="11" height="8" viewBox="0 0 11 8"><rect x="0.5" y="1.5" width="10" height="5" rx="2.5" fill="none" stroke="#b4b4b4" stroke-width="1"/><path d="M3,4 H8" stroke="#b4b4b4"/></svg>
<div class="t" style="left:689px;top:456px;font-size:10px;font-style:italic;font-family:'Liberation Serif',serif;color:#c8c8c8">fx</div>
<svg class="a" style="left:706px;top:458px;" width="9" height="8" viewBox="0 0 9 8"><rect x="0" y="0" width="9" height="8" fill="#c8c8c8"/><circle cx="4.5" cy="4" r="2.3" fill="#444"/></svg>
<svg class="a" style="left:721px;top:458px;" width="10" height="9" viewBox="0 0 10 9"><circle cx="4.5" cy="4" r="3.6" fill="none" stroke="#c8c8c8" stroke-width="1.2"/><path d="M4.5,0.4 A3.6,3.6 0 0 0 4.5,7.6Z" fill="#c8c8c8" transform="rotate(45 4.5 4)"/></svg>
<svg class="a" style="left:737px;top:458px;" width="10" height="8" viewBox="0 0 10 8"><path d="M0,1 H4 L5,2 H10 V8 H0Z" fill="#c8c8c8"/></svg>
<svg class="a" style="left:754px;top:457px;" width="8" height="10" viewBox="0 0 8 10"><path d="M0.5,2.5 H5 L7.5,5 V9.5 H0.5Z" fill="#c8c8c8"/><path d="M3,0.5 H7.5 V5" fill="none" stroke="#c8c8c8"/></svg>
<svg class="a" style="left:770px;top:457px;" width="9" height="10" viewBox="0 0 9 10"><path d="M0,2 H9 M3,2 V0.5 H6 V2" stroke="#c8c8c8" fill="none"/><path d="M1,3 H8 L7.5,9.5 H1.5Z" fill="#c8c8c8"/><path d="M3,4 V8.5 M4.5,4 V8.5 M6,4 V8.5" stroke="#555" stroke-width="0.6"/></svg>
<svg class="a" style="left:680px;top:464px;" width="2" height="2" viewBox="0 0 2 2"><rect width="2" height="2" fill="#aaa"/></svg>
<svg class="a" style="left:698px;top:464px;" width="2" height="2" viewBox="0 0 2 2"><rect width="2" height="2" fill="#aaa"/></svg>
<svg class="a" style="left:730px;top:464px;" width="2" height="2" viewBox="0 0 2 2"><rect width="2" height="2" fill="#aaa"/></svg>
<svg class="a" style="left:614px;top:53px;" width="7" height="4" viewBox="0 0 7 4"><path d="M1,3.5 L3.5,1 L6,3.5Z" fill="#e8e8e8"/></svg>
<svg class="a" style="left:614px;top:451px;" width="7" height="4" viewBox="0 0 7 4"><path d="M1,0.5 L3.5,3 L6,0.5Z" fill="#e8e8e8"/></svg>
<div class="a" style="left:74px;top:458px;width:14px;height:9px;background:#5a5a5a;border:1px solid #3a3a3a"></div>
<div class="t" style="left:76px;top:460px;font-size:7px;color:#9a9a9a">O%</div>
<svg class="a" style="left:194px;top:460px;" width="6" height="7" viewBox="0 0 6 7"><path d="M0.5,0.5 L5.5,3.5 L0.5,6.5Z" fill="#e8e8e8"/></svg>
<svg class="a" style="left:204px;top:460px;" width="4" height="6" viewBox="0 0 4 6"><path d="M3.5,0.5 L0.5,3 L3.5,5.5Z" fill="#d8d8d8"/></svg>
<svg class="a" style="left:606px;top:460px;" width="4" height="6" viewBox="0 0 4 6"><path d="M0.5,0.5 L3.5,3 L0.5,5.5Z" fill="#d8d8d8"/></svg>
</body></html>
